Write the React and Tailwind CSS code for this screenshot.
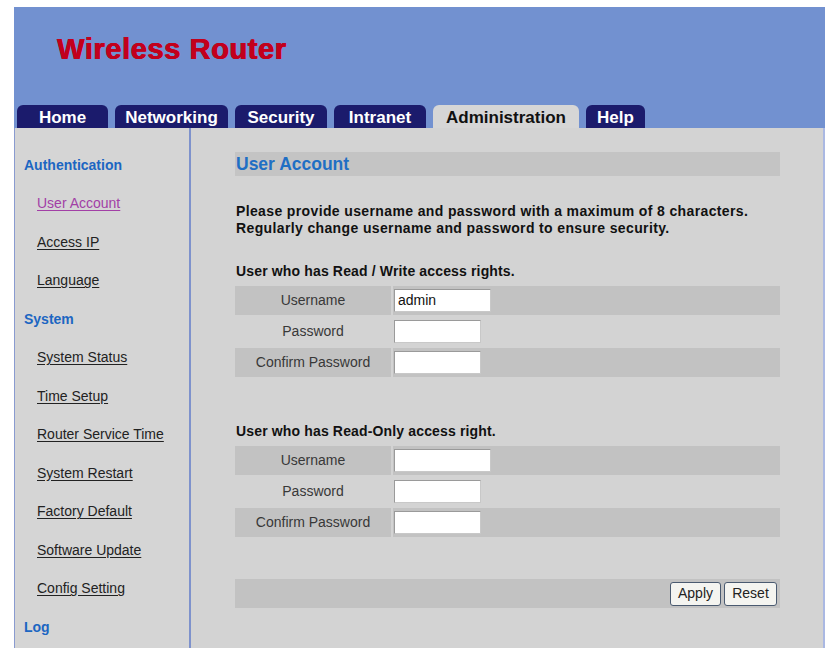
import React from "react";

const font = { fontFamily: '"Liberation Sans", Arial, sans-serif' };

const tabs = [
  { label: "Home", w: "w-[91px]" },
  { label: "Networking", w: "w-[113px]" },
  { label: "Security", w: "w-[92px]" },
  { label: "Intranet", w: "w-[92px]" },
  { label: "Administration", w: "w-[146px]", active: true },
  { label: "Help", w: "w-[59px]" },
];

const side = [
  { t: "Authentication", h: true },
  { t: "User Account", visited: true },
  { t: "Access IP" },
  { t: "Language" },
  { t: "System", h: true },
  { t: "System Status" },
  { t: "Time Setup" },
  { t: "Router Service Time" },
  { t: "System Restart" },
  { t: "Factory Default" },
  { t: "Software Update" },
  { t: "Config Setting" },
  { t: "Log", h: true },
];

function Rows({ username }) {
  const rows = [
    { l: "Username", dark: true, w: "w-[97px]", v: username },
    { l: "Password", dark: false, w: "w-[87px]", v: "" },
    { l: "Confirm Password", dark: true, w: "w-[87px]", v: "" },
  ];
  return (
    <div className="flex flex-col gap-[2px]">
      {rows.map((r) => (
        <div key={r.l} className="grid grid-cols-[156px_1fr] gap-[2px] h-[29px]">
          <div
            className={`${r.dark ? "bg-[#c2c2c2]" : ""} flex items-center justify-center text-[14px] text-[#383838]`}
          >
            {r.l}
          </div>
          <div className={`${r.dark ? "bg-[#c2c2c2]" : ""} flex items-center pl-[1px]`}>
            <div
              className={`${r.w} h-[23px] bg-white border border-t-[#9a9a9a] border-l-[#9a9a9a] border-r-[#c8c8c8] border-b-[#c8c8c8] text-[14px] text-[#111] leading-[21px] pl-[3px]`}
            >
              {r.v}
            </div>
          </div>
        </div>
      ))}
    </div>
  );
}

export default function App() {
  return (
    <div className="w-[840px] h-[660px] bg-white pt-[7px] pl-[14px]" style={font}>
      <div className="w-[811px] flex flex-col">
        {/* header */}
        <div className="h-[121px] bg-[#7291d0] flex flex-col">
          <div className="pl-[43px] pt-[28px] text-[29px] leading-none font-bold text-[#c2001c] tracking-[0.6px] [text-shadow:0.6px_0_0_#c2001c,-0.3px_0_0_#c2001c]">
            Wireless Router
          </div>
          <div className="mt-auto flex gap-[7px] pl-[3px]">
            {tabs.map((t) => (
              <div
                key={t.label}
                className={`${t.w} h-[23px] rounded-t-[6px] pt-[3px] leading-[20px] text-center text-[17px] font-bold ${
                  t.active ? "bg-[#d6d6d6] text-[#111]" : "bg-[#1b1b6c] text-white"
                }`}
              >
                {t.label}
              </div>
            ))}
          </div>
        </div>
        {/* body */}
        <div className="flex h-[520px] bg-[#d3d3d3] border-l border-l-[#8a9bd0]">
          <div className="w-[174px] flex flex-col pt-[18px] bg-[#d5d5d5]">
            {side.map((s) => (
              <div
                key={s.t}
                className={`h-[38.5px] flex items-center text-[14px] ${
                  s.h ? "pl-[9px] font-bold text-[#1c66c2]" : "pl-[22px]"
                }`}
              >
                {s.h ? (
                  s.t
                ) : (
                  <span
                    className={`underline underline-offset-[2px] ${
                      s.visited ? "text-[#a23fa6]" : "text-[#222]"
                    }`}
                  >
                    {s.t}
                  </span>
                )}
              </div>
            ))}
          </div>
          <div className="w-[2px] bg-[#7e92cc]" />
          <div className="flex-1 border-r-2 border-r-[#aab8e2] pl-[44px] pr-[43px] pt-[24px]">
            <div className="h-[24px] bg-[#c4c4c4] flex items-center pl-[1px] text-[17.5px] font-bold text-[#1f6fc4]">
              User Account
            </div>
            <div className="mt-[27px] text-[14px] tracking-[0.37px] font-bold leading-[17px] text-[#111] pl-[1px]">
              <div>Please provide username and password with a maximum of 8 characters.</div>
              <div>Regularly change username and password to ensure security.</div>
            </div>
            <div className="mt-[26px] text-[14px] tracking-[0.15px] font-bold leading-[17px] text-[#111] pl-[1px] mb-[6px]">
              User who has Read / Write access rights.
            </div>
            <Rows username="admin" />
            <div className="mt-[46px] text-[14px] tracking-[0.15px] font-bold leading-[17px] text-[#111] pl-[1px] mb-[6px]">
              User who has Read-Only access right.
            </div>
            <Rows username="" />
            <div className="mt-[42px] h-[29px] bg-[#c2c2c2] flex items-center justify-end gap-[3px] pr-[3px]">
              <div className="w-[51px] h-[24px] rounded-[3px] border border-[#4a5a70] bg-[#f4f4f0] text-[14px] text-[#222] flex items-center justify-center">
                Apply
              </div>
              <div className="w-[53px] h-[24px] rounded-[3px] border border-[#4a5a70] bg-[#f4f4f0] text-[14px] text-[#222] flex items-center justify-center">
                Reset
              </div>
            </div>
          </div>
        </div>
      </div>
    </div>
  );
}
